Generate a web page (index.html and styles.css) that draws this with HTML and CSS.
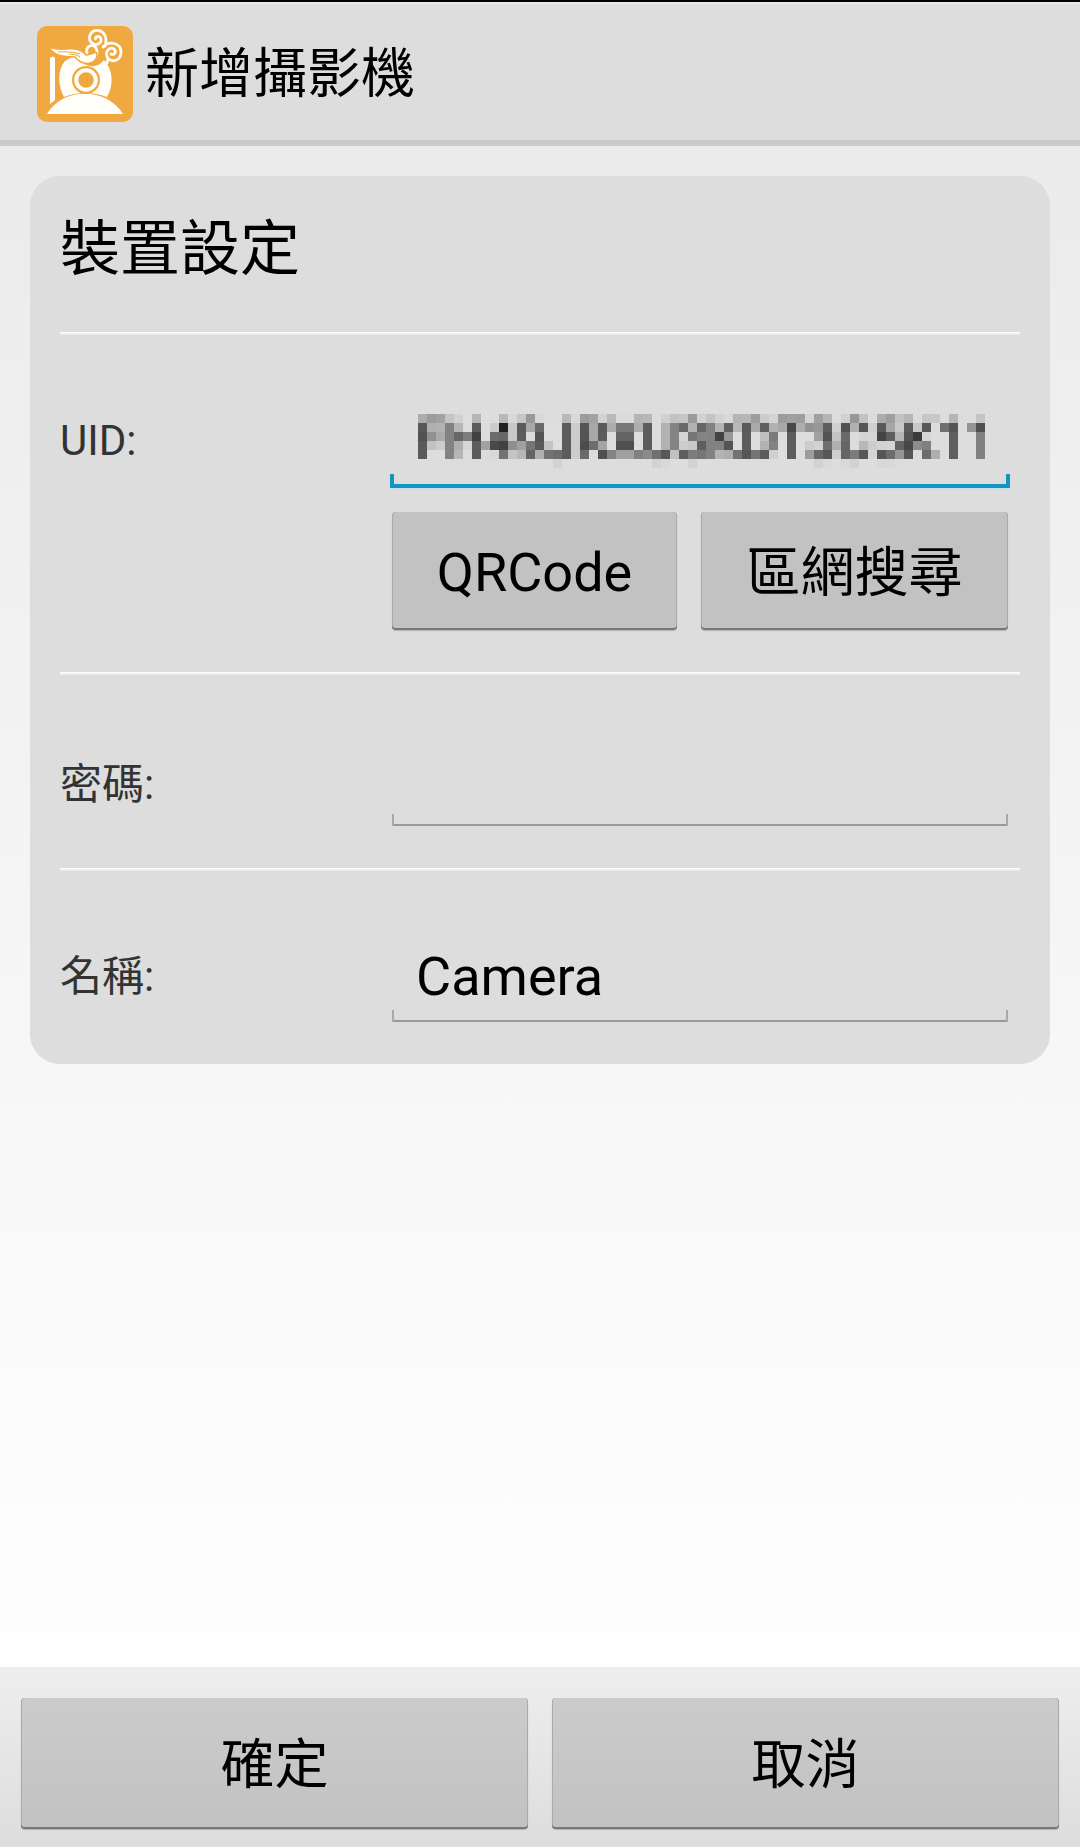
FILE: index.html
```html
<!DOCTYPE html>
<html lang="zh-Hant">
<head>
<meta charset="utf-8">
<title>新增攝影機</title>
<link rel="stylesheet" href="styles.css">
</head>
<body>
<div class="screen">
  <header class="app-bar">
    <svg class="app-icon" viewBox="0 0 96 96" aria-hidden="true">
      <rect width="96" height="96" rx="10" fill="#f0a941"/>
      <g fill="#fffef8">
        <path d="M13 32q3-3 5 0v42l-5 4z"/>
        <path d="M28 35C20 44 21 60 27 71Q48 63 70 71C77 59 76 43 67 34Q59 44 47 38L37 30Z"/>
        <path d="M10 88C25 61 70 61 86 88Z"/>
      </g>
      <g fill="none" stroke="#fffef8" stroke-width="2.8" stroke-linecap="round">
        <path d="M68 20C71 12 67 5 61 4.5C53 4 50 13 55 17C60 21 66 16 63.5 12C62 9.5 58 10.5 58.5 13"/>
        <path d="M66 21C72 14 84 17 84 26C84 35 75 37 71 32C67 27 72 20 77 23C80 26 77 30 74 28M71 32L70 37"/>
        <path d="M50 27C48 20 56 17 59 22C61 26 60 29 58 31"/>
      </g>
      <path d="M11 21C22 25 30 22 38 23Q45 24 49 29C55 29 58 25 60 27C61 39 46 41 38 31C31 30 20 33 11 21Z" fill="#fffef8" stroke="#f0a941" stroke-width="1.6"/>
      <path d="M21 26Q33 25 43 28M32 28Q39 28 43 31" fill="none" stroke="#f0a941" stroke-width="1.2"/>
      <circle cx="49" cy="54" r="14" fill="#f0a941"/>
      <circle cx="49" cy="54" r="9.8" fill="none" stroke="#fffef8" stroke-width="4"/>
    </svg>
    <h1 class="app-title">新增攝影機</h1>
  </header>

  <main class="content">
    <section class="card">
      <h2 class="card-title">裝置設定</h2>
      <div class="row row-uid">
        <span class="label">UID:</span>
        <div class="field-column">
          <div class="field field-active"><svg class="mosaic" id="uid-mosaic" viewBox="0 0 63 6" preserveAspectRatio="none" shape-rendering="crispEdges"></svg></div>
          <div class="actions">
            <button class="button button-qr">QRCode</button>
            <button class="button button-lan">區網搜尋</button>
          </div>
        </div>
      </div>
      <div class="row row-password">
        <span class="label">密碼:</span>
        <div class="field"></div>
      </div>
      <div class="row row-name">
        <span class="label">名稱:</span>
        <div class="field">Camera</div>
      </div>
    </section>
  </main>

  <footer class="footer">
    <button class="button">確定</button>
    <button class="button">取消</button>
  </footer>
</div>
<script src="mosaic.js"></script>
</body>
</html>
```
FILE: styles.css
```css
* {
  box-sizing: border-box;
}

body {
  margin: 0;
  color: #000;
  font-family: Roboto, "Noto Sans CJK TC", sans-serif;
}

.screen {
  display: flex;
  flex-direction: column;
  height: 1847px;
  overflow: hidden;
  background: linear-gradient(#e8e8e8 0, #ebebeb 160px, #f7f7f7 1064px, #fefefe 1640px);
}

.app-bar {
  display: flex;
  align-items: center;
  gap: 12px;
  height: 146px;
  padding: 6px 37px 0;
  border-top: 2px solid #000;
  border-bottom: 6px solid #cacaca;
  background: linear-gradient(#e8e8e8 2px, #ddd 2px);
}

.app-icon {
  width: 96px;
  height: 96px;
}

.app-title,
.card-title {
  margin: 0;
  font-weight: 400;
}

.app-title {
  padding-top: 2px;
  font-size: 54px;
  line-height: 80px;
}

.content {
  flex: 1;
  padding: 30px;
}

.card {
  height: 888px;
  padding: 0 30px;
  border-radius: 30px;
  background: #ddd;
}

.card-title {
  height: 156px;
  padding-top: 30px;
  font-size: 60px;
  line-height: 88px;
}

.row {
  display: flex;
  padding-top: 3px;
  background: linear-gradient(#fff 1px, #eee 1px, #eee 3px, transparent 3px);
}

.row-uid {
  height: 340px;
}

.row-password,
.row-name {
  height: 196px;
}

.label {
  width: 330px;
  padding-top: 74px;
  color: #333;
  font-size: 42px;
  line-height: 64px;
}

.row-password .label {
  padding-top: 78px;
}

.row-name .label {
  padding-top: 74px;
}

/* An input is an underline with a short tick rising from each end. */
.field {
  --line: #999;
  --tick: #aaa;
  --stroke: 2px;
  --rise: 12px;
  width: 616px;
  height: 92px;
  margin: 59px 0 0 2px;
  padding: 1px 24px 0;
  font-size: 54px;
  line-height: 92px;
  background:
    linear-gradient(var(--tick), var(--tick)) left bottom / var(--stroke) var(--rise) no-repeat,
    linear-gradient(var(--tick), var(--tick)) right bottom / var(--stroke) var(--rise) no-repeat,
    linear-gradient(var(--line), var(--line)) left bottom / 100% var(--stroke) no-repeat;
}

.field-active {
  --line: #1295c1;
  --tick: #1295c1;
  --stroke: 4px;
  --rise: 14px;
  width: 620px;
  margin: 61px 0 0;
  padding: 18px 28px 0;
  box-shadow: 0 1px #c0e0ea;
}

.mosaic {
  display: block;
  width: 567px;
  height: 54px;
}

.actions {
  display: flex;
  gap: 24px;
  padding: 24px 0 0 2px;
}

.button {
  flex: 1;
  padding: 0 0 6px;
  border: 0;
  border-radius: 4px;
  color: #000;
  font: inherit;
  font-size: 54px;
  box-shadow: inset 0 -2px #777, inset 1px 0 #aaa, inset -1px 0 #aaa, 0 1px 1px rgba(0, 0, 0, 0.2);
}

.actions .button {
  flex: none;
  height: 118px;
  background: #c2c2c2;
}

.actions .button-qr {
  width: 285px;
  padding: 2px 0 0;
}

.button-lan {
  width: 307px;
}

.footer {
  display: flex;
  gap: 24px;
  height: 180px;
  padding: 31px 21px 18px;
  background: linear-gradient(#eee, #ddd);
}

.footer .button {
  background: linear-gradient(#cbcbcb, #c2c2c2);
}
```
FILE: mosaic.js
```js
// Gray level of each block that masks the UID, two hex digits per block.
const rows = [
  "ac9ca2c4d2deb6deddb8d8c698d8ddddb8d89ca2d2" + "b8dadab4b8dcd0c2c69ad2c4d2d8b4b69eccd49ca0" + "9ed4a0b6dcd098c2dcac9ec2b6dcc6c8dcb6dcdcc4",
  "58b0b282b6dc5cdccc22c85aa86adede5ccc56a85a" + "ac7878ae5cdcb2846ab26682b460b85aaa60b2a848" + "ae92985ed052b056d05aa6c85ac858dc7054dc9450",
  "5290aa82667c40dc6c68c85cdc54dede5ccc54a85c" + "dc6464de5cdcb284d67684824298de5cdcc07ade5c" + "dddda054c26adcd4d6445eb6543ad6dddd5edddd80",
  "5ac2cc82aed65ca24a428ea0765ac4de5ccc4c6ea4" + "dc5050de5cdcb284ccc85e828254de5cdcb282de5c" + "ddccd26eb066ddb8ccd2d462488c80dddd5edddd80",
  "5adddd82b6dd5cdcd872c4b864b0726c5ccc6adc50" + "84a0a0808a7058c05e7c7682b4ae7256745cd0de5c" + "dd9c6856ce667c56d4566c9456dc6caedd5edddd80",
  "dddddddddddddddddddddddddddddd" + "d2dddddddddd" + "ddddddddddd2d9ddddd2dddddddddddddddddddddd" + "ddddd2d9ddd9d2ddddd8d8dddddddddddddddddddd"
];
const svg = document.getElementById("uid-mosaic");
rows.forEach((row, y) => {
  row.match(/../g).forEach((level, x) => {
    const block = document.createElementNS("http://www.w3.org/2000/svg", "rect");
    block.setAttribute("x", x);
    block.setAttribute("y", y);
    block.setAttribute("width", 1);
    block.setAttribute("height", 1);
    block.setAttribute("fill", "#" + level.repeat(3));
    svg.appendChild(block);
  });
});
```
